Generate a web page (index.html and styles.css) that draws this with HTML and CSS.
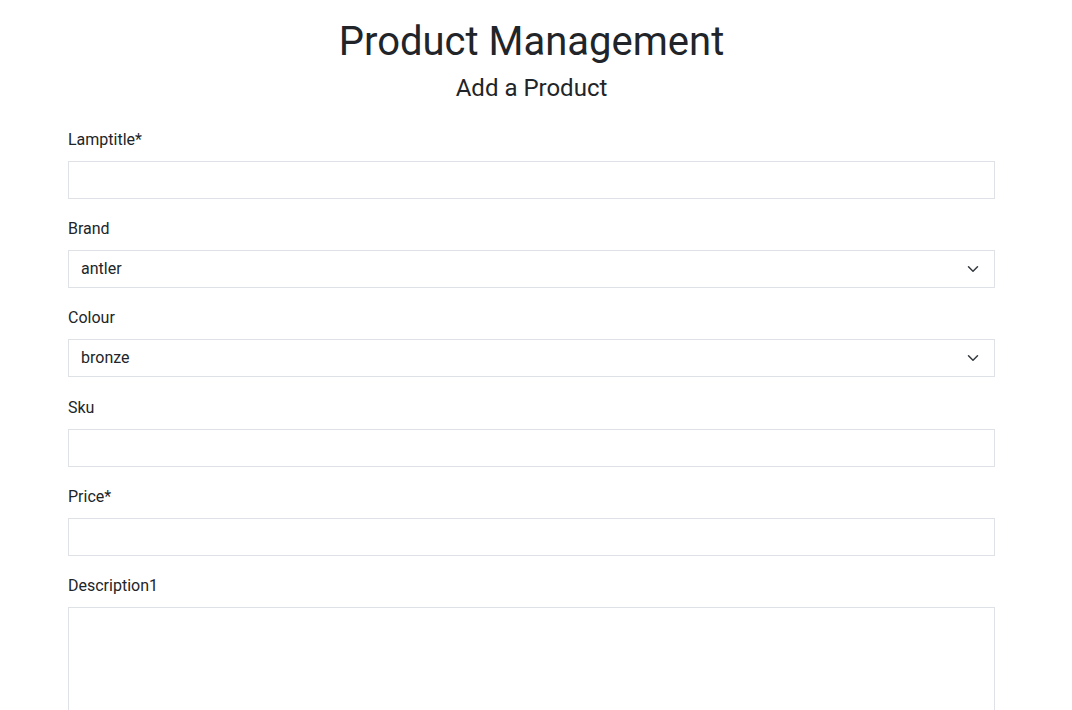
FILE: index.html
```html
<!DOCTYPE html>
<html>
<head>
<meta charset="utf-8">
<link rel="stylesheet" href="styles.css">
</head>
<body>
<div class="container">
  <h1 class="title">Product Management</h1>
  <h2 class="subtitle">Add a Product</h2>
  <form class="form">
    <div class="group">
      <label class="label">Lamptitle*</label>
      <input class="control" type="text">
    </div>
    <div class="group">
      <label class="label">Brand</label>
      <div class="select">
        <span>antler</span>
        <svg class="chev" width="12" height="12" viewBox="0 0 16 16"><path d="M2 5l6 6 6-6" fill="none" stroke="#343a40" stroke-width="2" stroke-linecap="round" stroke-linejoin="round"/></svg>
      </div>
    </div>
    <div class="group">
      <label class="label">Colour</label>
      <div class="select">
        <span>bronze</span>
        <svg class="chev" width="12" height="12" viewBox="0 0 16 16"><path d="M2 5l6 6 6-6" fill="none" stroke="#343a40" stroke-width="2" stroke-linecap="round" stroke-linejoin="round"/></svg>
      </div>
    </div>
    <div class="group">
      <label class="label">Sku</label>
      <input class="control" type="text">
    </div>
    <div class="group">
      <label class="label">Price*</label>
      <input class="control" type="text">
    </div>
    <div class="group">
      <label class="label">Description1</label>
      <textarea class="area"></textarea>
    </div>
  </form>
</div>
</body>
</html>
```
FILE: styles.css
```css
* { box-sizing: border-box; }
html, body { margin: 0; padding: 0; background: #fff; }
body {
  font-family: Roboto, "Liberation Sans", sans-serif;
  color: #212529;
  font-size: 16px;
  line-height: 24px;
}
.container {
  width: 927px;
  margin-left: 68px;
}
.title {
  margin: 0;
  padding-top: 18px;
  text-align: center;
  font-size: 40px;
  font-weight: 400;
  line-height: 48px;
}
.subtitle {
  margin: 8px 0 0;
  text-align: center;
  font-size: 24px;
  font-weight: 400;
  line-height: 28px;
}
.form { margin-top: 26px; }
.group {
  display: flex;
  flex-direction: column;
  margin-bottom: 18.2px;
}
.label {
  display: block;
  margin-bottom: 9px;
  line-height: 24px;
}
.control, .select, .area {
  width: 100%;
  height: 38px;
  border: 1px solid #dee2e6;
  background: #fff;
  font: inherit;
  color: #212529;
  padding: 0 12px;
  margin: 0;
  outline: none;
  border-radius: 0;
}
.select {
  display: flex;
  align-items: center;
  justify-content: space-between;
  padding-right: 15px;
}
.chev { width: 12px; height: 12px; }
.area {
  height: 160px;
  resize: none;
  display: block;
}
```
